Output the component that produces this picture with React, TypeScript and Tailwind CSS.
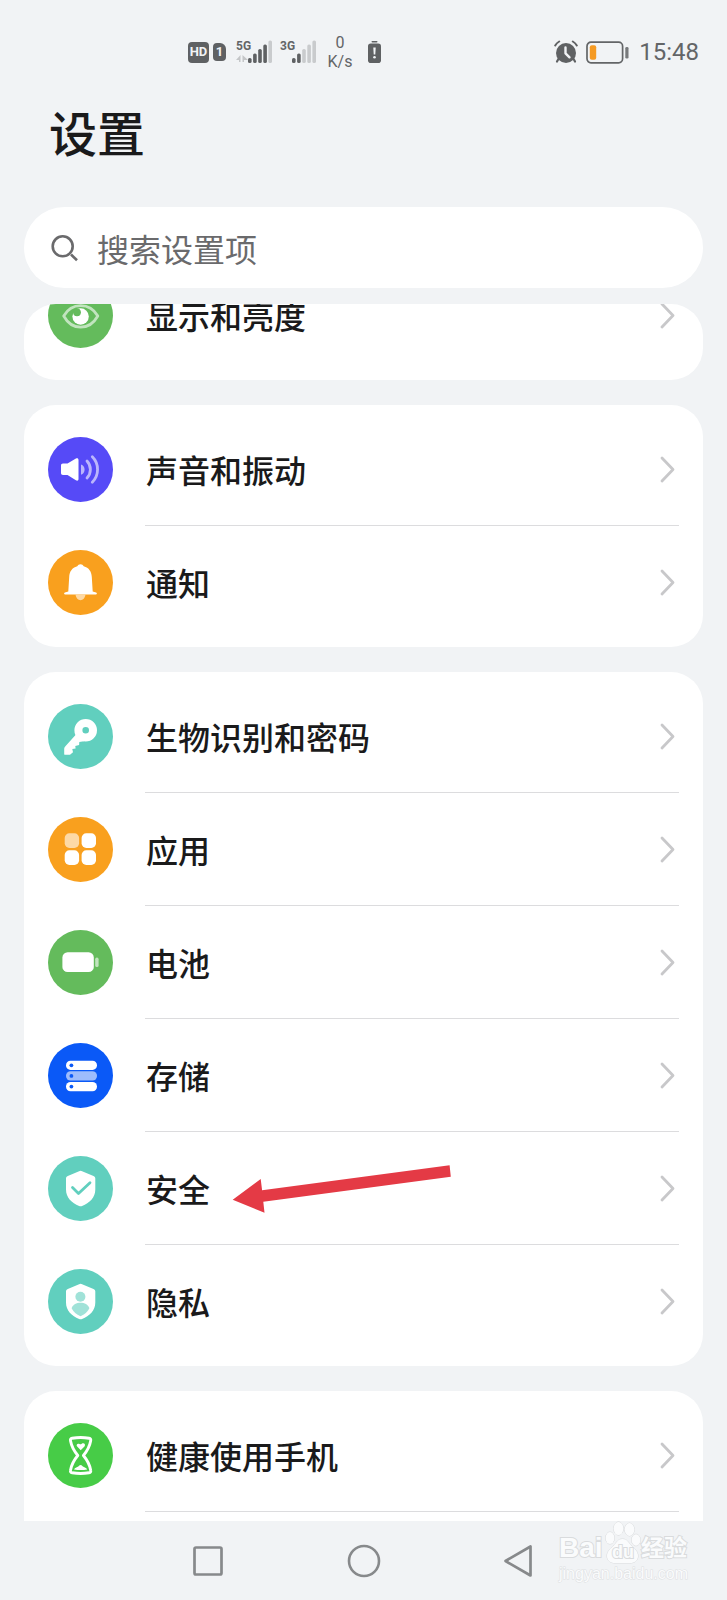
import type { ReactNode } from "react";

interface SettingItem {
  label: string;
  icon: ReactNode;
  marked?: boolean;
}

interface IconCircleProps {
  color: string;
  children: ReactNode;
}

const IconCircle = ({ color, children }: IconCircleProps) => (
  <svg className="w-[65px] h-[65px] shrink-0" viewBox="0 0 65 65" fill="none" aria-hidden="true">
    <circle cx="32.5" cy="32.5" r="32.5" fill={color} />
    {children}
  </svg>
);

const SHIELD = "M32.6 14.7c.6 0 1 .2 1.500.5L45.500 20c1.200.5 1.800 1.300 1.800 2.500v11c0 8-5.800 13.500-13.200 16.500-1 .4-2 .4-3 0C23.800 47 18 41.500 18 33.500v-11c0-1.200.6-2 1.800-2.500l11.300-4.800c.5-.3 1-.5 1.500-.5z";

const EyeIcon = () => (
  <IconCircle color="#64bb5c">
    <path d="M15.700 33C19.500 26.500 25.500 22.700 32.600 22.700S46 26.500 49.800 33C46 39.800 40 44.200 32.600 44.200S19.500 39.800 15.700 33z" stroke="#fff" strokeOpacity="0.6" strokeWidth="2.800" strokeLinejoin="round" />
    <circle cx="32.600" cy="33.500" r="8.200" fill="#fff" />
    <circle cx="29" cy="29.300" r="3.900" fill="#64bb5c" />
  </IconCircle>
);

const SoundIcon = () => (
  <IconCircle color="#564af7">
    <path d="M15 26.500h4.500l8.400-4.900c1.400-.8 2.600-.2 2.600 1.400v19c0 1.600-1.200 2.200-2.600 1.200l-8.400-5.200H15c-1.300 0-2-.8-2-2v-7.500c0-1.200.7-2 2-2z" fill="#fff" />
    <g stroke="#fff" strokeOpacity="0.6" strokeWidth="2.800" strokeLinecap="round">
      <path d="M39 24c4.500 4.700 4.500 12.300 0 17" />
      <path d="M44.300 19.800c7 7 7 18.400 0 25.400" />
    </g>
    <path d="M33 27.500c4.800 1.500 4.800 8.800 0 10.300z" fill="#fff" fillOpacity="0.6" />
  </IconCircle>
);

const BellIcon = () => (
  <IconCircle color="#f9a01e">
    <path d="M27.500 44.800h10c-.6 3.400-2.400 5.400-5 5.400s-4.400-2-5-5.400z" fill="#fff" fillOpacity="0.6" />
    <path d="M32.500 14.300c1.500 0 2.500.7 3.200 2 5.300 1.400 7.800 5.400 8.100 10.700l.9 14.500 3.400 1c1.200.4 1 1.900-.3 1.900H17.200c-1.300 0-1.500-1.500-.3-1.900l3.400-1 .9-14.500c.3-5.300 2.800-9.300 8.100-10.700.7-1.300 1.700-2 3.200-2z" fill="#fff" />
  </IconCircle>
);

const KeyIcon = () => (
  <IconCircle color="#61cfbe">
    <path d="M28 30.500L17.400 42.200c-.8.900-1.200 1.600-1.200 2.700v5c0 .6.300.9.900.9H22l3-2.500-.7-3.200 3.300-.6-.3-2.400 3.800-1 .2-3.200 4.700-.6z" fill="#fff" />
    <circle cx="37.700" cy="26.300" r="7.300" stroke="#fff" strokeWidth="8" />
  </IconCircle>
);

const AppsIcon = () => (
  <IconCircle color="#f9a01e">
    <g fill="#fff">
      <rect x="16.700" y="16.300" width="14.400" height="14.600" rx="4.700" fillOpacity="0.6" />
      <rect x="33.600" y="16.300" width="14.400" height="14.600" rx="4.700" />
      <rect x="16.700" y="33.300" width="14.400" height="14.600" rx="4.700" />
      <rect x="33.600" y="33.300" width="14.400" height="14.600" rx="4.700" />
    </g>
  </IconCircle>
);

const BatteryIcon = () => (
  <IconCircle color="#64bb5c">
    <rect x="14.400" y="22.300" width="31.400" height="19.800" rx="5.200" fill="#fff" />
    <rect x="47.200" y="27.600" width="3.400" height="9.400" rx="1.600" fill="#fff" fillOpacity="0.6" />
  </IconCircle>
);

const StorageIcon = () => (
  <IconCircle color="#0a59f7">
    <g fill="#fff">
      <rect x="18" y="17.700" width="31" height="9.200" rx="4.500" />
      <rect x="18" y="28.300" width="31" height="9.200" rx="4.500" fillOpacity="0.6" />
      <rect x="18" y="39" width="31" height="9.200" rx="4.500" />
    </g>
    <g fill="#0a59f7">
      <circle cx="23.400" cy="22.300" r="1.900" />
      <circle cx="23.400" cy="32.900" r="1.900" />
      <circle cx="23.400" cy="43.600" r="1.900" />
    </g>
  </IconCircle>
);

const SecurityIcon = () => (
  <IconCircle color="#61cfbe">
    <path d={SHIELD} fill="#fff" />
    <path d="M24.500 31.500l6 6 11.500-10.800" stroke="#61cfbe" strokeWidth="2.800" strokeLinecap="round" strokeLinejoin="round" />
  </IconCircle>
);

const PrivacyIcon = () => (
  <IconCircle color="#61cfbe">
    <path d={SHIELD} fill="#fff" />
    <g fill="#61cfbe" fillOpacity="0.6">
      <circle cx="32.400" cy="27.800" r="5" />
      <path d="M23.600 39.200c1.500-3.800 4.800-5.400 8.900-5.400s7.400 1.600 8.900 5.400c-1.800 3.600-4.800 6.200-8.900 8-4.100-1.800-7.100-4.400-8.900-8z" />
    </g>
  </IconCircle>
);

const HourglassIcon = () => (
  <IconCircle color="#47cc47">
    <path d="M24.200 15.200c5.500-.9 11.300-.9 16.800 0 1.500.3 2 1.200 1.700 2.600-1 5.500-3.500 10.200-7.300 14.700 3.800 4.500 6.300 9.200 7.300 14.700.3 1.400-.2 2.300-1.700 2.600-5.500.9-11.300.9-16.800 0-1.500-.3-2-1.200-1.700-2.600 1-5.500 3.500-10.200 7.300-14.700-3.800-4.500-6.300-9.200-7.300-14.700-.3-1.400.2-2.300 1.700-2.600z" stroke="#fff" strokeWidth="2.900" strokeLinejoin="round" />
    <path d="M32.700 27.300l-3.500-3.700c-1.500-1.700.3-3.800 2.300-2.600.8.500 1.400.4 2.200-.2 2.200-1.500 4.300.6 2.800 2.600z" fill="#fff" />
    <path d="M26 46.400c1.200-1.700 2.400-2 3.800-2.600 1.300-.8 1.700-1.800 2.800-1.800s1.500 1 2.800 1.800c1.400.6 2.600.9 3.800 2.600-4.400.7-8.800.7-13.200 0z" fill="#fff" />
  </IconCircle>
);

const displayItem: SettingItem = { label: "显示和亮度", icon: <EyeIcon /> };

const groups: SettingItem[][] = [
  [
    { label: "声音和振动", icon: <SoundIcon /> },
    { label: "通知", icon: <BellIcon /> },
  ],
  [
    { label: "生物识别和密码", icon: <KeyIcon /> },
    { label: "应用", icon: <AppsIcon /> },
    { label: "电池", icon: <BatteryIcon /> },
    { label: "存储", icon: <StorageIcon /> },
    { label: "安全", icon: <SecurityIcon />, marked: true },
    { label: "隐私", icon: <PrivacyIcon /> },
  ],
];

const healthItem: SettingItem = { label: "健康使用手机", icon: <HourglassIcon /> };

const MarkerArrow = () => (
  <svg className="absolute left-[208px] top-8 w-[220px] h-[50px]" viewBox="0 0 220 50" aria-hidden="true">
    <path d="M.7 35.700L28.700 15l1.400 11.200L217.600 1.300l1.200 11.500L31.300 37.700l1.200 11z" fill="#e43a45" />
  </svg>
);

const SettingRow = ({ item, divider }: { item: SettingItem; divider: boolean }) => (
  <a href="#" className="relative flex items-center gap-8 h-[113px] shrink-0 px-6">
    {item.icon}
    <span
      className={`flex flex-1 items-center justify-between self-stretch pr-1 border-b ${
        divider ? "border-[#dcdcde]" : "border-transparent"
      }`}
    >
      <span className="pl-px text-[32px] leading-10 font-medium">{item.label}</span>
      <svg className="w-4 h-7" viewBox="0 0 16 28" fill="none" aria-hidden="true">
        <path d="M3 3L14 14.500l-11 11.500" stroke="#c8c8ca" strokeWidth="2.800" strokeLinecap="round" strokeLinejoin="round" />
      </svg>
    </span>
    {item.marked && <MarkerArrow />}
  </a>
);

const Signal = ({ label, level, arrows }: { label: string; level: number; arrows?: boolean }) => (
  <div className="flex">
    <div className="flex flex-col w-3 h-6">
      <span className="text-xs leading-3 font-bold">{label}</span>
      {arrows && (
        <svg className="w-3 h-3" viewBox="0 0 12 12" fill="#c4c6c8" aria-hidden="true">
          <path d="M4.500 3v7H3V8H0zM6.500 3v7H8V8h4z" />
        </svg>
      )}
    </div>
    <svg className="w-6 h-6" viewBox="0 0 24 24" aria-hidden="true">
      {[5, 9.5, 14, 18.5, 22.5].map((height, i) => (
        <rect
          key={height}
          x={i * 5.1}
          y={23 - height}
          width="3.600"
          height={height}
          rx="1.600"
          fill={i < level ? "#5f6163" : "#c9cbcd"}
        />
      ))}
    </svg>
  </div>
);

const StatusBar = () => (
  <div className="flex items-center justify-between h-[104px] pl-[188px] pr-7 text-[#636567] font-[Roboto,sans-serif]">
    <div className="flex items-center">
      <span className="flex items-center justify-center w-[21px] h-[21px] rounded bg-[#5f6163] text-[#f1f3f5] text-[13px] leading-4 font-bold">
        HD
      </span>
      <span className="flex items-center justify-center w-[13px] h-[18px] ml-1 rounded-sm rounded-tr-md bg-[#5f6163] text-[#f1f3f5] text-[13px] leading-4 font-bold">
        1
      </span>
      <div className="flex gap-2 ml-[10px]">
        <Signal label="5G" level={4} arrows />
        <Signal label="3G" level={2} />
      </div>
      <div className="flex flex-col items-center w-8 ml-2 text-base leading-[19px]">
        <span>0</span>
        <span>K/s</span>
      </div>
      <svg className="w-[13px] h-[22px] ml-3" viewBox="0 0 13 22" aria-hidden="true">
        <rect x="3.500" y="0" width="6" height="1.600" rx=".8" fill="#5f6163" />
        <rect x="0" y="2.400" width="13" height="19.600" rx="2.800" fill="#5f6163" />
        <path d="M5.300 6.500h2.400l-.4 7H5.700z" fill="#f1f3f5" />
        <circle cx="6.500" cy="16.300" r="1.300" fill="#f1f3f5" />
      </svg>
    </div>
    <div className="flex items-center">
      <svg className="w-6 h-6" viewBox="0 0 24 24" fill="none" aria-hidden="true">
        <path d="M5 18l-2 3.500M19 18l2 3.500" stroke="#5f6163" strokeWidth="2.200" strokeLinecap="round" />
        <circle cx="12" cy="13" r="10" fill="#5f6163" />
        <path d="M1.200 5.500c1-1.800 2.200-3 4-4M22.800 5.500c-1-1.800-2.200-3-4-4" stroke="#5f6163" strokeWidth="2" strokeLinecap="round" />
        <path d="M11.500 7.500v5.800l4 4" stroke="#f1f3f5" strokeWidth="2.400" strokeLinecap="round" strokeLinejoin="round" />
      </svg>
      <svg className="w-[43px] h-[23px] ml-2" viewBox="0 0 43 23" fill="none" aria-hidden="true">
        <rect x="1" y="1.200" width="35.600" height="20.600" rx="4" stroke="#636567" strokeWidth="1.700" />
        <rect x="3.800" y="4.200" width="6.400" height="14.600" rx="2" fill="#f59a23" />
        <rect x="39.300" y="6" width="3.200" height="11.500" rx="1.300" fill="#77797b" />
      </svg>
      <time className="ml-[10px] text-2xl leading-8">15:48</time>
    </div>
  </div>
);

const NavBar = () => (
  <nav className="grid grid-cols-3 h-[79px] px-[18%] items-center">
    <button aria-label="最近任务" className="flex justify-center">
      <svg className="w-9 h-9" viewBox="0 0 36 36" fill="none" stroke="#87898b" strokeWidth="2.700">
        <rect x="4.500" y="4.500" width="27" height="27" rx="1.500" />
      </svg>
    </button>
    <button aria-label="主页" className="flex justify-center">
      <svg className="w-9 h-9" viewBox="0 0 36 36" fill="none" stroke="#87898b" strokeWidth="2.600">
        <circle cx="18" cy="18" r="15" />
      </svg>
    </button>
    <button aria-label="返回" className="flex justify-center">
      <svg className="w-9 h-9" viewBox="0 0 36 36" fill="none" stroke="#87898b" strokeWidth="2.700" strokeLinejoin="round">
        <path d="M4.500 18L29.500 3.500v29z" />
      </svg>
    </button>
  </nav>
);

const Watermark = () => (
  <div
    aria-hidden="true"
    className="absolute right-9 bottom-4 flex flex-col w-[132px] text-[#fafbfc] font-['Liberation_Sans','Noto_Sans_CJK_SC',sans-serif] [-webkit-text-stroke:2px_#d9dbdd] [paint-order:stroke]"
  >
    <div className="flex items-end h-11">
      <span className="w-[46px] text-[28px] leading-8 font-bold">Bai</span>
      <div className="relative w-9 h-11 shrink-0">
        <svg className="absolute inset-0 w-9 h-11" viewBox="0 0 36 44" fill="#fafbfc" stroke="#d9dbdd" strokeWidth="1">
          <ellipse cx="5" cy="18" rx="4.400" ry="6" />
          <ellipse cx="13.500" cy="8.500" rx="4.800" ry="6.600" />
          <ellipse cx="24.500" cy="9.500" rx="4.800" ry="6.400" />
          <ellipse cx="31" cy="20" rx="4.400" ry="5.800" />
          <path d="M17.500 19c4.500 0 6 3.500 8.500 6.500 3 3 7 5.500 7 10.500 0 4.500-3.500 7-8 7h-15c-4.500 0-8-2.500-8-7 0-5 4-7.500 7-10.500 2.500-3 4-6.500 8.500-6.500z" />
        </svg>
        <span className="absolute inset-x-0 bottom-0 text-center text-lg leading-6 font-bold">du</span>
      </div>
      <span className="text-[23px] leading-8 font-bold whitespace-nowrap">经验</span>
    </div>
    <span className="text-base leading-5 [-webkit-text-stroke:1px_#dddfe1]">jingyan.baidu.com</span>
  </div>
);

export default function App() {
  return (
    <div className="relative flex flex-col min-h-screen overflow-hidden bg-[#f1f3f5] text-[#1a1a1b] font-['Noto_Sans_CJK_SC',sans-serif]">
      <StatusBar />
      <h1 className="px-[49px] text-5xl leading-[54px] font-medium">设置</h1>

      {/* Search */}
      <label className="flex items-center gap-[18px] h-[81px] mt-[49px] mx-6 px-[27px] rounded-full bg-white">
        <svg className="w-7 h-7 shrink-0" viewBox="0 0 28 28" fill="none" stroke="#6a6a6c" strokeWidth="2.600" aria-hidden="true">
          <circle cx="11.700" cy="12.300" r="10" />
          <path d="M20 20.500l6 5.700" />
        </svg>
        <input
          type="search"
          aria-label="搜索设置项"
          placeholder="搜索设置项"
          className="flex-1 min-w-0 h-12 bg-transparent text-[32px] outline-none placeholder:text-[#6a6a6c]"
        />
      </label>

      {/* Settings list */}
      <main className="flex flex-1 flex-col gap-[25px] mt-4 px-6">
        <section className="flex flex-col justify-end h-[76px] pb-2 rounded-[32px] bg-white overflow-hidden">
          <SettingRow item={displayItem} divider={false} />
        </section>
        {groups.map((items) => (
          <section key={items[0].label} className="py-2 rounded-[32px] bg-white">
            {items.map((item, i) => (
              <SettingRow key={item.label} item={item} divider={i < items.length - 1} />
            ))}
          </section>
        ))}
        <section className="flex-1 py-2 rounded-t-[32px] bg-white">
          <SettingRow item={healthItem} divider />
        </section>
      </main>

      <NavBar />
      <Watermark />
    </div>
  );
}
